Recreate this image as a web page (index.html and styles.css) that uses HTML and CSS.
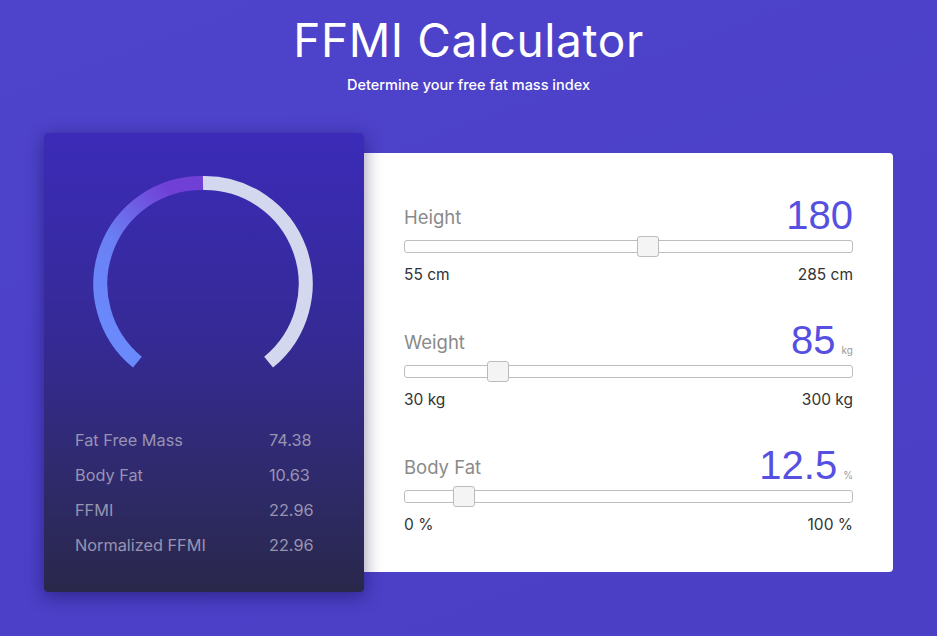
FILE: index.html
```html
<!DOCTYPE html>
<html>
<head>
<meta charset="utf-8">
<link rel="stylesheet" href="styles.css">
</head>
<body>
<header class="header">
  <h1 class="title">FFMI Calculator</h1>
  <p class="subtitle">Determine your free fat mass index</p>
</header>
<main class="main">
  <section class="result-card">
    <div class="gauge">
      <svg width="240" height="240" viewBox="0 0 240 240">
        <defs>
          <linearGradient id="g1" x1="0" y1="1" x2="0.6" y2="0">
            <stop offset="0" stop-color="#6a8dff"/>
            <stop offset="0.55" stop-color="#6a80f4"/>
            <stop offset="1" stop-color="#7040d6"/>
          </linearGradient>
        </defs>
        <path d="M 54.4 198.2 A 101 101 0 0 1 120 19" fill="none" stroke="url(#g1)" stroke-width="14"/>
        <path d="M 120 19 A 101 101 0 0 1 185.6 198.2" fill="none" stroke="#d3d8ee" stroke-width="14"/>
      </svg>
    </div>
    <div class="stats">
      <span class="stat-label">Fat Free Mass</span><span class="stat-value">74.38</span>
      <span class="stat-label">Body Fat</span><span class="stat-value">10.63</span>
      <span class="stat-label">FFMI</span><span class="stat-value">22.96</span>
      <span class="stat-label">Normalized FFMI</span><span class="stat-value">22.96</span>
    </div>
  </section>
  <section class="input-card">
    <div class="field">
      <div class="field-head">
        <span class="field-label">Height</span>
        <span class="field-value">180</span>
      </div>
      <div class="track"><div class="thumb" style="left: 51.9%"></div></div>
      <div class="range-labels"><span>55 cm</span><span>285 cm</span></div>
    </div>
    <div class="field">
      <div class="field-head">
        <span class="field-label">Weight</span>
        <span class="field-value">85<span class="unit">kg</span></span>
      </div>
      <div class="track"><div class="thumb" style="left: 18.3%"></div></div>
      <div class="range-labels"><span>30 kg</span><span>300 kg</span></div>
    </div>
    <div class="field">
      <div class="field-head">
        <span class="field-label">Body Fat</span>
        <span class="field-value">12.5<span class="unit">%</span></span>
      </div>
      <div class="track"><div class="thumb" style="left: 10.7%"></div></div>
      <div class="range-labels"><span>0 %</span><span>100 %</span></div>
    </div>
  </section>
</main>
</body>
</html>
```
FILE: styles.css
```css
* { box-sizing: border-box; }
html, body { margin: 0; padding: 0; }
body {
  width: 937px;
  height: 636px;
  overflow: hidden;
  background: linear-gradient(160deg, #4e43cb 0%, #4c40c8 60%, #4b3fc5 100%);
  font-family: "Inter", "Open Sans", sans-serif;
  color: #fff;
}
.header {
  text-align: center;
  padding-top: 12px;
  height: 133px;
}
.title {
  margin: 0;
  font-size: 46px;
  font-weight: 400;
  line-height: 56px;
  letter-spacing: 0.6px;
}
.subtitle {
  margin: 7px 0 0;
  font-size: 14.5px;
  font-weight: 500;
  line-height: 20px;
}
.main {
  display: flex;
  justify-content: center;
  align-items: center;
}
.result-card {
  position: relative;
  z-index: 2;
  width: 320px;
  height: 459px;
  border-radius: 4px;
  background: linear-gradient(180deg, #3b2bb8 0%, #352a95 45%, #2f2a6c 75%, #29284a 100%);
  box-shadow: 0 4px 18px rgba(10, 5, 60, 0.45);
  padding-top: 31px;
}
.gauge {
  display: flex;
  justify-content: center;
  height: 240px;
}
.gauge svg { display: block; margin-left: -2px; }
.stats {
  display: grid;
  grid-template-columns: 194px auto;
  row-gap: 14px;
  padding: 26px 0 0 31px;
  font-size: 16.3px;
  line-height: 21px;
  color: #9794b2;
}
.input-card {
  width: 529px;
  height: 419px;
  background: #fff;
  border-radius: 0 4px 4px 0;
  padding: 40px 40px 0 40px;
  display: flex;
  flex-direction: column;
  gap: 34px;
}
.field-head {
  display: flex;
  justify-content: space-between;
  align-items: flex-end;
  height: 46px;
}
.field-label {
  font-size: 18.5px;
  color: #8a8a8a;
  line-height: 22px;
  padding-bottom: 11px;
}
.field-value {
  font-family: "Liberation Sans", Arial, sans-serif;
  font-size: 40px;
  line-height: 40px;
  color: #5650e2;
  padding-bottom: 4px;
}
.unit {
  font-family: "Inter", sans-serif;
  font-size: 10px;
  color: #999;
  margin-left: 6px;
  line-height: 10px;
}
.track {
  position: relative;
  height: 13px;
  border: 1px solid #bdbdbd;
  border-radius: 3px;
  background: #fff;
  margin-top: 1px;
}
.thumb {
  position: absolute;
  top: -5px;
  width: 22px;
  height: 21px;
  border: 1px solid #bcbcbc;
  border-radius: 3px;
  background: #f4f4f4;
}
.range-labels {
  display: flex;
  justify-content: space-between;
  margin-top: 13px;
  font-size: 15.5px;
  line-height: 18px;
  color: #333;
}
```
